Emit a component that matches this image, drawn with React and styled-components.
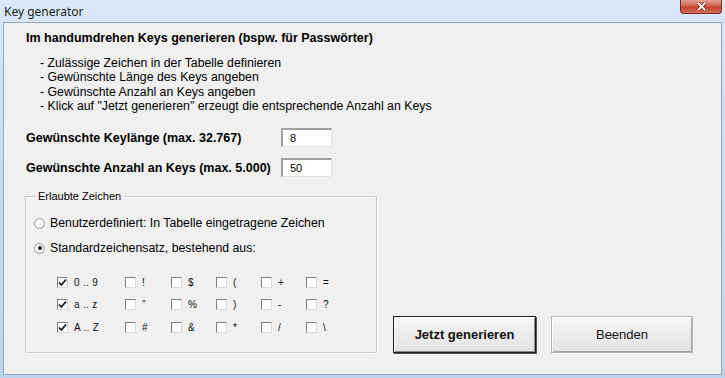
import React from 'react'
import styled, { createGlobalStyle } from 'styled-components'

const Global = createGlobalStyle`
  html, body {
    margin: 0;
    padding: 0;
    width: 725px;
    height: 378px;
    overflow: hidden;
    background: #c4d7ec;
    font-family: "Liberation Sans", Arial, sans-serif;
  }
`;

const Window = styled.div`
  width: 725px;
  height: 378px;
  display: flex;
  flex-direction: column;
  background: linear-gradient(180deg, #d9e7f6 0%, #c9dcf1 40%, #bfd4ec 100%);
  box-sizing: border-box;
`;

const TitleBar = styled.div`
  height: 22px;
  display: flex;
  align-items: flex-start;
  justify-content: space-between;
  padding-left: 4px;
  box-sizing: border-box;
`;

const TitleText = styled.span`
  font-family: "Noto Sans", "Liberation Sans", sans-serif;
  font-size: 12px;
  color: #1e1e1e;
  margin-top: 3px;
`;

const CloseBtn = styled.div`
  width: 42px;
  height: 14px;
  margin-right: 3px;
  border: 1px solid #7a2c22;
  border-top: none;
  border-radius: 0 0 4px 4px;
  background: linear-gradient(180deg, #e5a193 0%, #d2644e 45%, #c4432a 55%, #d2725a 100%);
  display: flex;
  align-items: center;
  justify-content: center;
  box-sizing: border-box;
`;

const Client = styled.div`
  flex: 1;
  margin: 0 3px 3px 3px;
  background: #f0f0f0;
  border: 1px solid #97a6b8;
  padding: 7px 0 0 22px;
  box-sizing: border-box;
  display: flex;
  flex-direction: column;
  color: #000;
`;

const Heading = styled.div`
  font-size: 12.5px;
  font-weight: bold;
  line-height: 16px;
`;

const Steps = styled.ul`
  list-style: none;
  margin: 10px 0 0 14px;
  padding: 0;
  font-size: 12.3px;
  line-height: 14.3px;
`;

const FieldRow = styled.div`
  display: grid;
  grid-template-columns: 255px 51px;
  align-items: center;
  margin-top: ${p => p.$gap}px;
`;

const FieldLabel = styled.span`
  font-size: 12.5px;
  font-weight: bold;
`;

const NumberBox = styled.div`
  height: 19px;
  box-sizing: border-box;
  background: #fff;
  border-top: 2px solid #a0a0a0;
  border-left: 2px solid #a0a0a0;
  border-right: 1px solid #e3e3e3;
  border-bottom: 1px solid #e3e3e3;
  font-size: 11px;
  padding-left: 7px;
  line-height: 16px;
`;

const Lower = styled.div`
  display: flex;
  align-items: flex-end;
  margin-top: 13px;
`;

const Group = styled.fieldset`
  width: 352px;
  height: 163px;
  box-sizing: border-box;
  margin: 0 0 0 -1px;
  padding: 4px 0 0 8px;
  border: 1px solid #c8c8c8;
  border-radius: 2px;
  box-shadow: inset 1px 1px 0 #fff, 1px 1px 0 #fff;
`;

const Legend = styled.legend`
  font-size: 11px;
  padding: 0 3px;
  margin-left: 1px;
  color: #000;
`;

const OptionRow = styled.label`
  display: flex;
  align-items: center;
  gap: 5px;
  height: 16px;
  font-size: 12.3px;
  margin-top: ${p => p.$gap}px;
`;

const Radio = styled.span`
  width: 11px;
  height: 11px;
  border-radius: 50%;
  box-sizing: border-box;
  border: 1px solid #9a9a9a;
  background: radial-gradient(circle at 40% 40%, #ffffff 0%, #e6e6e6 100%);
  display: flex;
  align-items: center;
  justify-content: center;
  &::after {
    content: "";
    width: 4px;
    height: 4px;
    border-radius: 50%;
    background: ${p => (p.$on ? '#1a1a1a' : 'transparent')};
  }
`;

const CharGrid = styled.div`
  display: grid;
  grid-template-columns: 68px 46px 45px 45px 45px 45px;
  grid-auto-rows: 22.5px;
  margin: 15px 0 0 23px;
`;

const Check = styled.span`
  display: flex;
  align-items: center;
  gap: 6px;
  font-size: 10px;
  letter-spacing: 0.3px;
  color: #111;
`;

const Box = styled.span`
  width: 11px;
  height: 11px;
  box-sizing: border-box;
  background: #fff;
  border-top: 1px solid #7f7f7f;
  border-left: 1px solid #7f7f7f;
  border-right: 1px solid #d8d8d8;
  border-bottom: 1px solid #d8d8d8;
  display: flex;
  align-items: center;
  justify-content: center;
`;

const Buttons = styled.div`
  display: flex;
  gap: 15px;
  margin-left: 16px;
`;

const Button = styled.button`
  width: ${p => (p.$default ? 143 : 142)}px;
  height: 37px;
  box-sizing: border-box;
  font-family: "Liberation Sans", Arial, sans-serif;
  font-size: 13px;
  font-weight: ${p => (p.$default ? 'bold' : 'normal')};
  color: #111;
  background: linear-gradient(180deg, #f6f6f6 0%, #ececec 50%, #e2e2e2 100%);
  border: 1px solid ${p => (p.$default ? '#1e1e1e' : '#b5b5b5')};
  box-shadow: ${p =>
    p.$default
      ? 'inset 1px 1px 0 #fff, inset -1px -1px 0 #8a8a8a, 1px 1px 0 #555'
      : 'inset 1px 1px 0 #fff, inset -1px -1px 0 #a8a8a8'};
  padding: 0;
`;

const chars = [
  ['0 .. 9', true], ['!', false], ['$', false], ['(', false], ['+', false], ['=', false],
  ['a .. z', true], ['"', false], ['%', false], [')', false], ['-', false], ['?', false],
  ['A .. Z', true], ['#', false], ['&', false], ['*', false], ['/', false], ['\\', false],
];

const Tick = () => (
  <svg width="9" height="9" viewBox="0 0 9 9">
    <path d="M1 4.5 L3.4 7 L8 1.5" fill="none" stroke="#1a1a1a" strokeWidth="1.8" />
  </svg>
);

export default function App() {
  return (
    <Window>
      <Global />
      <TitleBar>
        <TitleText>Key generator</TitleText>
        <CloseBtn>
          <svg width="11" height="9" viewBox="0 0 11 9">
            <path d="M2 1 L9 8 M9 1 L2 8" stroke="#5a1e14" strokeWidth="3.2" />
            <path d="M2 1 L9 8 M9 1 L2 8" stroke="#fff" strokeWidth="1.8" />
          </svg>
        </CloseBtn>
      </TitleBar>
      <Client>
        <Heading>Im handumdrehen Keys generieren (bspw. für Passwörter)</Heading>
        <Steps>
          <li>- Zulässige Zeichen in der Tabelle definieren</li>
          <li>- Gewünschte Länge des Keys angeben</li>
          <li>- Gewünschte Anzahl an Keys angeben</li>
          <li>- Klick auf "Jetzt generieren" erzeugt die entsprechende Anzahl an Keys</li>
        </Steps>
        <FieldRow $gap={15}>
          <FieldLabel>Gewünschte Keylänge (max. 32.767)</FieldLabel>
          <NumberBox>8</NumberBox>
        </FieldRow>
        <FieldRow $gap={11}>
          <FieldLabel>Gewünschte Anzahl an Keys (max. 5.000)</FieldLabel>
          <NumberBox>50</NumberBox>
        </FieldRow>
        <Lower>
          <Group>
            <Legend>Erlaubte Zeichen</Legend>
            <OptionRow $gap={9}>
              <Radio />
              Benutzerdefiniert: In Tabelle eingetragene Zeichen
            </OptionRow>
            <OptionRow $gap={9}>
              <Radio $on />
              Standardzeichensatz, bestehend aus:
            </OptionRow>
            <CharGrid>
              {chars.map(([label, on], i) => (
                <Check key={i}>
                  <Box>{on && <Tick />}</Box>
                  {label}
                </Check>
              ))}
            </CharGrid>
          </Group>
          <Buttons>
            <Button $default>Jetzt generieren</Button>
            <Button>Beenden</Button>
          </Buttons>
        </Lower>
      </Client>
    </Window>
  );
}
